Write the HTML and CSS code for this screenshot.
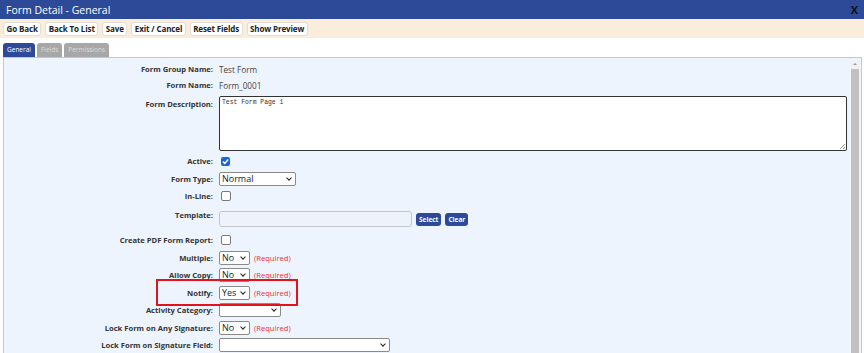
FILE: index.html
```html
<!DOCTYPE html>
<html lang="en">
<head>
    <meta charset="UTF-8">
    <title>Form Detail - General</title>
    <link rel="stylesheet" href="styles.css">
</head>
<body>

<!-- title bar -->
<div class="titlebar">
    <span>Form Detail - General</span>
    <span class="close">X</span>
</div>

<!-- toolbar -->
<div class="toolbar">
    <button class="tool-btn">Go Back</button>
    <button class="tool-btn">Back To List</button>
    <button class="tool-btn">Save</button>
    <button class="tool-btn">Exit / Cancel</button>
    <button class="tool-btn">Reset Fields</button>
    <button class="tool-btn">Show Preview</button>
</div>

<!-- tabs -->
<div class="tabs">
    <span class="tab active">General</span>
    <span class="tab">Fields</span>
    <span class="tab">Permissions</span>
</div>

<div class="panel">
    <div class="form">
        <div class="row first">
            <label class="label">Form Group Name:</label>
            <span class="value">Test Form</span>
        </div>
        <div class="row tight">
            <label class="label">Form Name:</label>
            <span class="value">Form_0001</span>
        </div>
        <div class="row top desc">
            <label class="label">Form Description:</label>
            <div class="textarea">Test Form Page 1<span class="grip"></span></div>
        </div>
        <div class="row">
            <label class="label">Active:</label>
            <span class="check on">
                <svg width="9" height="9" viewBox="0 0 9 9"><path d="M2 4.6 L3.8 6.4 L7.2 2.6" fill="none" stroke="#fff" stroke-width="1.5"/></svg>
            </span>
        </div>
        <div class="row">
            <label class="label">Form Type:</label>
            <div class="select w-type">Normal<span class="chev"></span></div>
        </div>
        <div class="row">
            <label class="label">In-Line:</label>
            <span class="check"></span>
        </div>
        <div class="row top template">
            <label class="label">Template:</label>
            <div class="inline">
                <div class="text-input"></div>
                <button class="small-btn">Select</button>
                <button class="small-btn">Clear</button>
            </div>
        </div>
        <div class="row">
            <label class="label">Create PDF Form Report:</label>
            <span class="check"></span>
        </div>
        <div class="row">
            <label class="label">Multiple:</label>
            <div class="inline">
                <div class="select w-yn">No<span class="chev"></span></div>
                <span class="required">(Required)</span>
            </div>
        </div>
        <div class="row">
            <label class="label">Allow Copy:</label>
            <div class="inline">
                <div class="select w-yn">No<span class="chev"></span></div>
                <span class="required">(Required)</span>
            </div>
        </div>
        <div class="row">
            <label class="label">Notify:</label>
            <div class="inline">
                <div class="select w-yn">Yes<span class="chev"></span></div>
                <span class="required">(Required)</span>
            </div>
        </div>
        <div class="row">
            <label class="label">Activity Category:</label>
            <div class="select w-cat"><span class="chev"></span></div>
        </div>
        <div class="row">
            <label class="label">Lock Form on Any Signature:</label>
            <div class="inline">
                <div class="select w-yn">No<span class="chev"></span></div>
                <span class="required">(Required)</span>
            </div>
        </div>
        <div class="row">
            <label class="label">Lock Form on Signature Field:</label>
            <div class="select w-field"><span class="chev"></span></div>
        </div>

        <!-- highlight drawn over the Notify row -->
        <div class="highlight"></div>
    </div>

    <div class="scrollbar">
        <span class="arrow"></span>
        <span class="thumb"></span>
    </div>
</div>

</body>
</html>
```

FILE: styles.css
```css
body {
    margin: 0;
    padding: 0;
    background-color: #ffffff;
    font-family: 'Open Sans', sans-serif;
    color: #333333;
    overflow: hidden;
}

/* title bar */
.titlebar {
    height: 19px;
    background-color: #2d4a98;
    color: #ffffff;
    font-size: 10.5px;
    display: flex;
    justify-content: space-between;
    align-items: center;
    padding: 0 6px 0 6px;
}

.close {
    color: #111111;
    font-weight: bold;
    font-size: 11px;
}

/* toolbar */
.toolbar {
    height: 19px;
    background-color: #faeddc;
    display: flex;
    align-items: center;
    gap: 4px;
    padding: 0 3px;
}

.tool-btn {
    height: 14px;
    padding: 0 2.5px;
    background-color: #ffffff;
    border: 1px solid #e3ddd3;
    border-radius: 3px;
    font-family: 'Open Sans', sans-serif;
    font-weight: bold;
    font-size: 8px;
    letter-spacing: -0.12px;
    color: #222222;
    line-height: 12px;
}

/* tabs */
.tabs {
    display: flex;
    gap: 2px;
    padding: 5px 0 0 3px;
    height: 14px;
}

.tab {
    background-color: #a7a7a7;
    color: #dcdcdc;
    font-size: 6.5px;
    line-height: 14px;
    padding: 0 4px;
    border-radius: 3px 3px 0 0;
}

.tab.active {
    background-color: #2d4a98;
    color: #ffffff;
}

/* content panel */
.panel {
    margin: 0 2px 0 3px;
    height: 296px;
    border: 1px solid #b8c8e6;
    border-bottom: none;
    background-color: #eef4fd;
    display: flex;
}

.form {
    flex: 1;
    position: relative;
    padding-top: 4px;
}

.row {
    display: grid;
    grid-template-columns: 209px 1fr;
    column-gap: 6px;
    align-items: center;
    min-height: 14px;
    margin-top: 3.5px;
}

.row.first {
    margin-top: 0;
}

.row.tight {
    margin-top: 2px;
}

.row.top {
    align-items: start;
}

.row.desc {
    margin-top: 4px;
    margin-bottom: -0.5px;
}

.row.template {
    margin-top: 8px;
    margin-bottom: 6px;
}

.label {
    text-align: right;
    font-weight: bold;
    font-size: 7.6px;
    color: #333333;
    line-height: 14px;
}

.row.desc .label {
    padding-top: 1px;
}

.row.template .label {
    margin-top: -3px;
}

.value {
    font-size: 8.2px;
    color: #444444;
}

.textarea {
    position: relative;
    width: 622px;
    height: 51px;
    background-color: #ffffff;
    border: 1.5px solid #333333;
    border-radius: 2px;
    font-family: 'Liberation Mono', monospace;
    font-size: 6.4px;
    padding: 2px 2px 0 2px;
    color: #333333;
}

.grip {
    position: absolute;
    right: 1px;
    bottom: 1px;
    width: 5px;
    height: 5px;
    background: linear-gradient(135deg, transparent 45%, #999 45%, #999 55%, transparent 55%, transparent 75%, #999 75%, #999 85%, transparent 85%);
}

/* checkboxes */
.check {
    display: inline-block;
    width: 8px;
    height: 8px;
    margin-left: 2px;
    border: 1px solid #7a7a7a;
    border-radius: 2px;
    background-color: #ffffff;
}

.check.on {
    background-color: #1768d7;
    width: 9px;
    height: 9px;
    border: none;
}

.check svg {
    display: block;
}

/* selects */
.select {
    position: relative;
    box-sizing: border-box;
    height: 14px;
    border: 1px solid #8a8a8a;
    border-radius: 2px;
    background-color: #ffffff;
    font-size: 9px;
    line-height: 12px;
    padding-left: 2px;
    color: #222222;
}

.chev {
    position: absolute;
    right: 4px;
    top: 3px;
    width: 3px;
    height: 3px;
    border-right: 1.3px solid #222;
    border-bottom: 1.3px solid #222;
    transform: rotate(45deg);
}

.w-type { width: 77px; }
.w-yn { width: 31px; }
.w-cat { width: 62px; }
.w-field { width: 171px; }

.inline {
    display: flex;
    align-items: center;
    gap: 4px;
}

.required {
    color: #f0303c;
    font-size: 7.6px;
}

.text-input {
    box-sizing: border-box;
    width: 193px;
    height: 16px;
    border: 1px solid #c3c7cc;
    border-radius: 3px;
    background-color: #eef3fb;
}

.small-btn {
    height: 13px;
    padding: 0 3px;
    background-color: #2d4a98;
    color: #ffffff;
    border: none;
    border-radius: 3px;
    font-family: 'Open Sans', sans-serif;
    font-weight: bold;
    font-size: 6.5px;
    line-height: 13px;
}

.highlight {
    position: absolute;
    left: 152px;
    top: 221px;
    width: 138px;
    height: 23px;
    border: 2px solid #e3121b;
}

/* scrollbar */
.scrollbar {
    width: 8px;
    margin: 3px 2px 0 0;
    display: flex;
    flex-direction: column;
    background-color: #f1f1f1;
}

.arrow {
    height: 8px;
    position: relative;
}

.arrow::after {
    content: "";
    position: absolute;
    left: 2px;
    top: 2px;
    border-left: 2px solid transparent;
    border-right: 2px solid transparent;
    border-bottom: 2px solid #9a9a9a;
}

.thumb {
    flex: 1;
    background-color: #c1c1c1;
}
```
